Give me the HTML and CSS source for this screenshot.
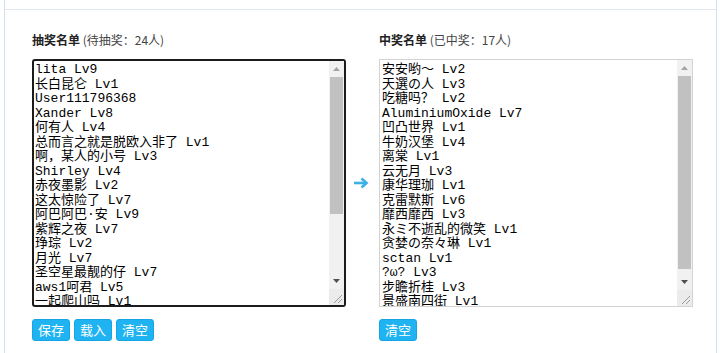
FILE: index.html
```html
<!DOCTYPE html>
<html lang="zh-CN">
<head>
    <meta charset="UTF-8">
    <meta name="viewport" content="width=device-width, initial-scale=1.0">
    <title>抽奖</title>
    <link rel="stylesheet" href="styles.css">
</head>
<body>
    <div class="panel">
        <div class="panelHead"></div>

        <div class="lottery">
            <div class="listTitle"><b>抽奖名单</b> (待抽奖：24人)</div>
            <div></div>
            <div class="listTitle"><b>中奖名单</b> (已中奖：17人)</div>

            <div class="listBox focused">
                <textarea class="nameList" spellcheck="false">lita Lv9
长白昆仑 Lv1
User111796368
Xander Lv8
何有人 Lv4
总而言之就是脱欧入非了 Lv1
啊，某人的小号 Lv3
Shirley Lv4
赤夜墨影 Lv2
这太惊险了 Lv7
阿巴阿巴·安 Lv9
紫辉之夜 Lv7
琤琮 Lv2
月光 Lv7
圣空星最靓的仔 Lv7
aws1呵君 Lv5
一起爬山吗 Lv1
路过的猫 Lv2
Kirito Lv3
北城以北 Lv5
清风徐来 Lv1
moon Lv4
橘子汽水 Lv6
小透明 Lv2</textarea>
                <div class="scrollBar">
                    <div class="sbBtn">
                        <svg width="7" height="4" viewBox="0 0 7 4"><path d="M0 4L3.5 0L7 4z" fill="#a3a3a3" /></svg>
                    </div>
                    <div class="sbTrack"><div class="sbThumb thumbLeft"></div></div>
                    <div class="sbBtn">
                        <svg width="7" height="4" viewBox="0 0 7 4"><path d="M0 0L3.5 4L7 0z" fill="#505050" /></svg>
                    </div>
                    <div class="sbGrip">
                        <svg width="9" height="9" viewBox="0 0 9 9"><path d="M1 9L9 1M5 9L9 5" stroke="#9a9a9a" stroke-width="1" /></svg>
                    </div>
                </div>
            </div>

            <div class="arrow">
                <svg width="16" height="12" viewBox="0 0 16 12">
                    <path d="M1 6 H13" stroke="#3ab2e4" stroke-width="2.6" fill="none" />
                    <path d="M8.5 1.5 L13.5 6 L8.5 10.5" stroke="#3ab2e4" stroke-width="2.6" fill="none" />
                </svg>
            </div>

            <div class="listBox">
                <textarea class="nameList" spellcheck="false">安安哟～ Lv2
天選の人 Lv3
吃糖吗？ Lv2
AluminiumOxide Lv7
凹凸世界 Lv1
牛奶汉堡 Lv4
离棠 Lv1
云无月 Lv3
康华理珈 Lv1
克雷默斯 Lv6
靡西靡西 Lv3
永ミ不逝乱的微笑 Lv1
贪婪の奈々琳 Lv1
sctan Lv1
?ω? Lv3
步瞻折桂 Lv3
景盛南四街 Lv1</textarea>
                <div class="scrollBar">
                    <div class="sbBtn">
                        <svg width="7" height="4" viewBox="0 0 7 4"><path d="M0 4L3.5 0L7 4z" fill="#a3a3a3" /></svg>
                    </div>
                    <div class="sbTrack"><div class="sbThumb thumbRight"></div></div>
                    <div class="sbBtn">
                        <svg width="7" height="4" viewBox="0 0 7 4"><path d="M0 0L3.5 4L7 0z" fill="#505050" /></svg>
                    </div>
                    <div class="sbGrip">
                        <svg width="9" height="9" viewBox="0 0 9 9"><path d="M1 9L9 1M5 9L9 5" stroke="#9a9a9a" stroke-width="1" /></svg>
                    </div>
                </div>
            </div>

            <div class="btnRow">
                <button class="btn">保存</button>
                <button class="btn">载入</button>
                <button class="btn">清空</button>
            </div>
            <div></div>
            <div class="btnRow">
                <button class="btn">清空</button>
            </div>
        </div>
    </div>
</body>
</html>
```

FILE: styles.css
```css
* {
    box-sizing: border-box;
}

html, body {
    height: 100%;
}

body {
    margin: 0;
    background-color: #fff;
    font-family: "Noto Sans CJK SC", sans-serif;
    font-size: 12px;
    color: #444;
}

.panel {
    height: 100%;
    margin: 0 3px 0 4px;
    border-left: 1px solid #cfe2f3;
    border-right: 1px solid #cfe2f3;
}

.panelHead {
    height: 10px;
    border-bottom: 1px solid #e1e7ee;
}

.lottery {
    display: grid;
    grid-template-columns: 314px 33px 314px;
    padding: 22px 0 0 27px;
}

.listTitle {
    line-height: 16px;
    height: 16px;
    margin-bottom: 11px;
    white-space: nowrap;
}

.listTitle b {
    color: #222;
}

/* textarea + hand drawn scrollbar */
.listBox {
    display: flex;
    height: 248px;
    border: 1px solid #d3d3d3;
    background: #fff;
}

.listBox.focused {
    border: 2px solid #1c1c1c;
    border-radius: 3px;
}

.nameList {
    flex: 1;
    min-width: 0;
    margin: 0;
    padding: 3px 2px 0;
    border: none;
    font-family: "Liberation Mono", "Noto Sans CJK SC", monospace;
    font-size: 13px;
    line-height: 14.5px;
    color: #000;
    background: transparent;
    overflow: hidden;
    resize: none;
    outline: none;
}

.focused .nameList {
    padding: 2px 1px 0;
}

.scrollBar {
    width: 15px;
    display: flex;
    flex-direction: column;
    background-color: #f1f1f1;
}

.sbBtn {
    height: 16px;
    display: flex;
    align-items: center;
    justify-content: center;
}

.sbTrack {
    flex: 1;
    padding: 0 1px;
}

.sbThumb {
    background-color: #c1c1c1;
}

.thumbLeft {
    height: 137px;
}

.thumbRight {
    height: 193px;
}

.sbGrip {
    height: 16px;
    display: flex;
    align-items: flex-end;
    justify-content: flex-end;
    padding: 0 2px 2px 0;
    background-color: #ebebeb;
}

.arrow {
    display: flex;
    align-items: center;
    justify-content: center;
    padding-right: 4px;
}

.btnRow {
    display: flex;
    gap: 4px;
    margin-top: 12px;
}

.btn {
    height: 22px;
    padding: 0 5px;
    border: 1px solid #17a6e4;
    border-radius: 3px;
    background-color: #1fb3f1;
    color: #fff;
    font-family: "Noto Sans CJK SC", sans-serif;
    font-size: 13px;
    line-height: 20px;
    cursor: pointer;
}

.btn:hover {
    background-color: #3cbff5;
}
```
